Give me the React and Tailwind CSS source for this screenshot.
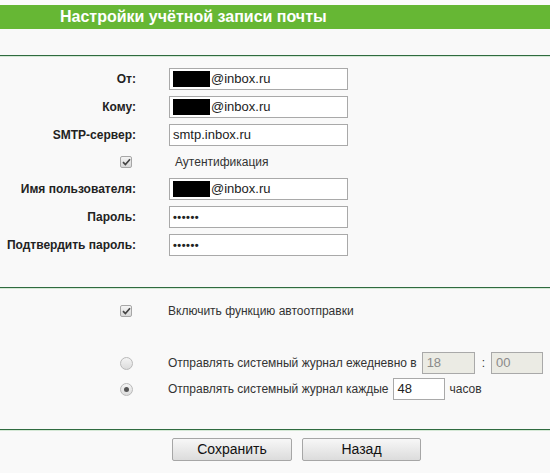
import React from "react";

function Check() {
  return (
    <span className="flex h-[12px] w-[12px] items-center justify-center rounded-[2px] border border-[#a7a7a7] bg-gradient-to-b from-[#f4f4f4] to-[#d8d8d8]">
      <svg width="9" height="8" viewBox="0 0 9 8">
        <path d="M1 4.2 L3.4 6.6 L8 1.2" fill="none" stroke="#444" strokeWidth="1.7" />
      </svg>
    </span>
  );
}

function Radio({ on }) {
  return (
    <span className="flex h-[13px] w-[13px] items-center justify-center rounded-full border border-[#b9b9b9] bg-gradient-to-b from-[#f4f4f4] to-[#dcdcdc]">
      {on && <span className="h-[5px] w-[5px] rounded-full bg-[#555]" />}
    </span>
  );
}

function Field({ children }) {
  return (
    <div className="flex h-[22px] w-[179px] items-center border border-[#a9a9a9] bg-white pl-[3px] text-[13px] text-[#222]">
      {children}
    </div>
  );
}

function Redacted() {
  return (
    <div className="flex items-center">
      <span className="mr-[1px] h-[16px] w-[37px] bg-black" />
      <span>@inbox.ru</span>
    </div>
  );
}

function Row({ label, children }) {
  return (
    <div className="flex h-[28px] items-center">
      <div className="w-[136px] text-right text-[12px] font-bold text-[#222]">{label}</div>
      <div className="ml-[33px]">{children}</div>
    </div>
  );
}

function Dots() {
  return <span className="text-[11px] font-bold tracking-[0.5px] leading-none">••••••</span>;
}

function Line() {
  return (
    <div className="flex flex-col">
      <div className="h-[1px] bg-[#2f6b40]" />
      <div className="h-[1px] bg-[#d5e8d6]" />
    </div>
  );
}

export default function App() {
  return (
    <div className="h-[473px] w-[550px] overflow-hidden bg-[#f9f9f9] font-['Liberation_Sans',Arial,sans-serif]">
      <div className="h-[5px] bg-[#fbfbfb]" />
      <div className="flex h-[24px] items-center bg-[#66b734] pl-[60px] text-[16px] font-bold text-white">
        Настройки учётной записи почты
      </div>
      <div className="h-[26px]" />
      <Line />
      <div className="pt-[8px]">
        <Row label="От:">
          <Field><Redacted /></Field>
        </Row>
        <Row label="Кому:">
          <Field><Redacted /></Field>
        </Row>
        <Row label="SMTP-сервер:">
          <Field>smtp.inbox.ru</Field>
        </Row>
        <div className="flex h-[26px] items-center">
          <div className="ml-[120px]"><Check /></div>
          <span className="ml-[43px] text-[12px] text-[#333]">Аутентификация</span>
        </div>
        <Row label="Имя пользователя:">
          <Field><Redacted /></Field>
        </Row>
        <Row label="Пароль:">
          <Field><Dots /></Field>
        </Row>
        <Row label="Подтвердить пароль:">
          <Field><Dots /></Field>
        </Row>
      </div>
      <div className="h-[28px]" />
      <Line />
      <div className="flex h-[42px] items-center pt-[2px]">
        <div className="ml-[120px]"><Check /></div>
        <span className="ml-[36px] text-[12px] text-[#333]">Включить функцию автоотправки</span>
      </div>
      <div className="h-[19px]" />
      <div className="flex h-[26px] items-center">
        <div className="ml-[120px]"><Radio /></div>
        <span className="ml-[35px] text-[12px] text-[#333]">Отправлять системный журнал ежедневно в</span>
        <div className="ml-[5px] flex h-[22px] w-[53px] items-center border border-[#a9a9a9] bg-[#ebebe4] pl-[4px] text-[13px] text-[#8a8a8a]">18</div>
        <span className="ml-[7px] text-[12px] text-[#333]">:</span>
        <div className="ml-[6px] flex h-[22px] w-[52px] items-center border border-[#a9a9a9] bg-[#ebebe4] pl-[4px] text-[13px] text-[#8a8a8a]">00</div>
      </div>
      <div className="flex h-[26px] items-center">
        <div className="ml-[120px]"><Radio on /></div>
        <span className="ml-[35px] text-[12px] text-[#333]">Отправлять системный журнал каждые</span>
        <div className="ml-[4px] flex h-[22px] w-[52px] items-center border border-[#a9a9a9] bg-white pl-[4px] text-[13px] text-[#222]">48</div>
        <span className="ml-[5px] text-[12px] text-[#333]">часов</span>
      </div>
      <div className="h-[27px]" />
      <Line />
      <div className="flex pl-[172px] pt-[7px] gap-[10px]">
        <button className="h-[23px] w-[120px] rounded-[2px] border border-[#a6a6a6] bg-gradient-to-b from-[#f7f7f7] to-[#dcdcdc] text-[14px] text-[#111]">Сохранить</button>
        <button className="h-[23px] w-[119px] rounded-[2px] border border-[#a6a6a6] bg-gradient-to-b from-[#f7f7f7] to-[#dcdcdc] text-[14px] text-[#111]">Назад</button>
      </div>
    </div>
  );
}
